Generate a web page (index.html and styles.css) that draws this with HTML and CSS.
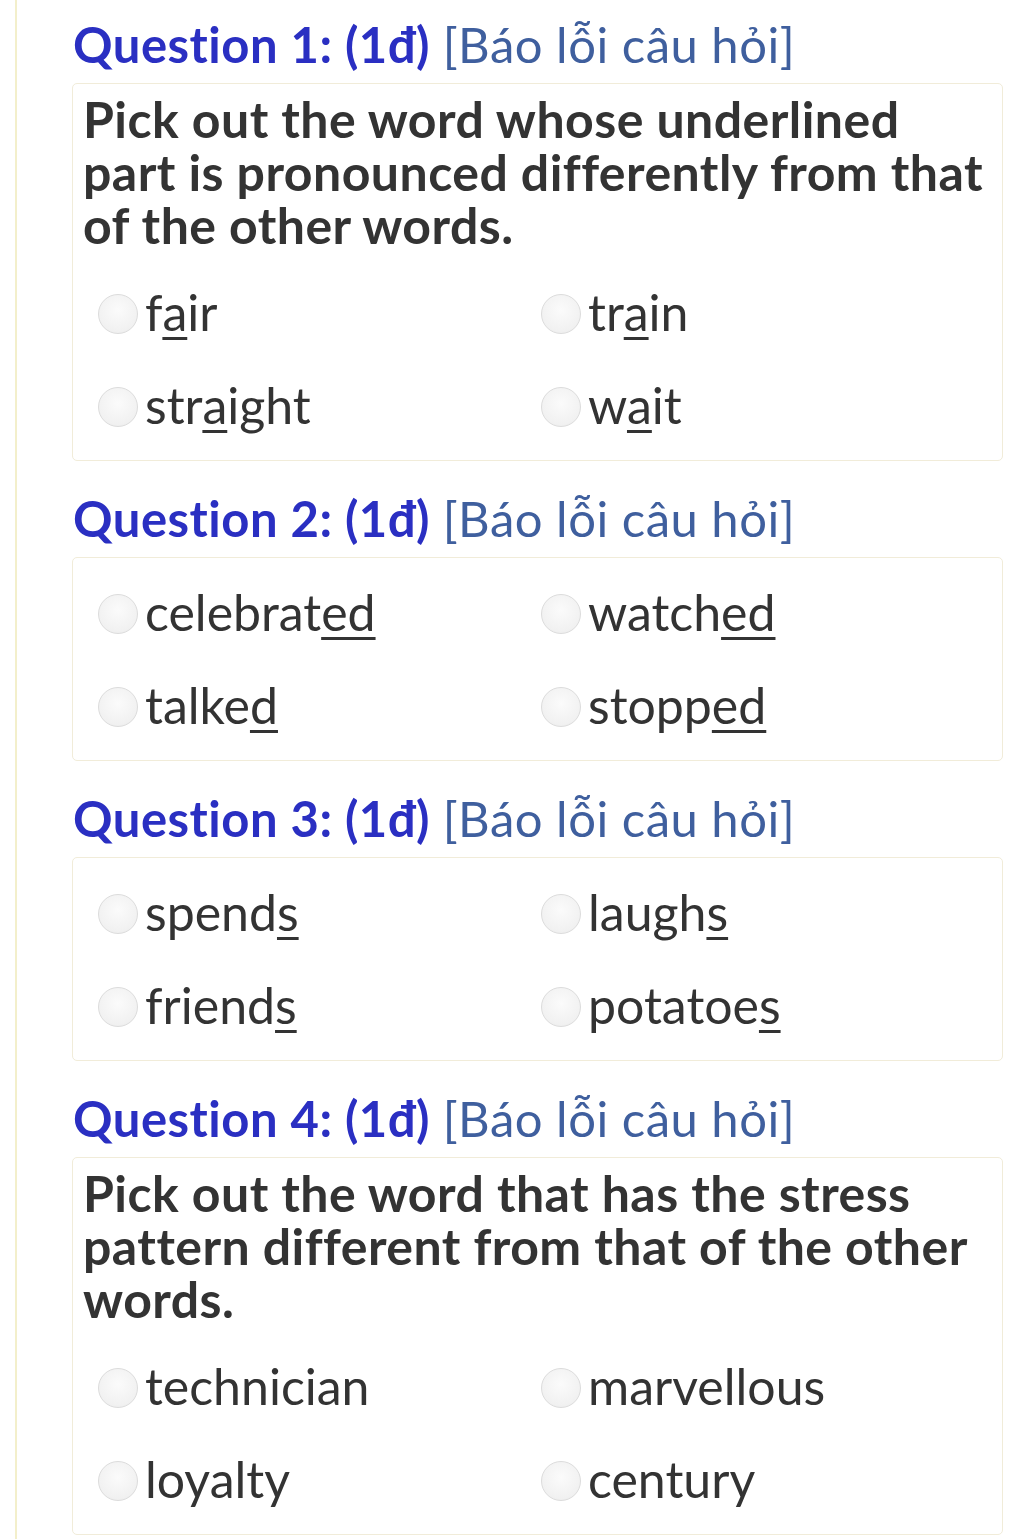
FILE: index.html
```html
<!DOCTYPE html>
<html lang="vi">
<head>
<meta charset="utf-8">
<title>Quiz</title>
<link rel="stylesheet" href="styles.css">
</head>
<body>
<div class="page">
  <section class="question first">
    <h2 class="q-title"><span class="q-num">Question 1: (1đ)</span> <a class="report" href="#">[Báo lỗi câu hỏi]</a></h2>
    <div class="q-box">
      <p class="q-text">Pick out the word whose underlined part is pronounced differently from that of the other words.</p>
      <div class="options">
        <label class="opt"><span class="radio"></span><span class="word">f<u>a</u>ir</span></label>
        <label class="opt"><span class="radio"></span><span class="word">tr<u>a</u>in</span></label>
        <label class="opt"><span class="radio"></span><span class="word">str<u>a</u>ight</span></label>
        <label class="opt"><span class="radio"></span><span class="word">w<u>a</u>it</span></label>
      </div>
    </div>
  </section>
  <section class="question">
    <h2 class="q-title"><span class="q-num">Question 2: (1đ)</span> <a class="report" href="#">[Báo lỗi câu hỏi]</a></h2>
    <div class="q-box">
      <div class="options">
        <label class="opt"><span class="radio"></span><span class="word">celebrat<u>ed</u></span></label>
        <label class="opt"><span class="radio"></span><span class="word">watch<u>ed</u></span></label>
        <label class="opt"><span class="radio"></span><span class="word">talke<u>d</u></span></label>
        <label class="opt"><span class="radio"></span><span class="word">stopp<u>ed</u></span></label>
      </div>
    </div>
  </section>
  <section class="question">
    <h2 class="q-title"><span class="q-num">Question 3: (1đ)</span> <a class="report" href="#">[Báo lỗi câu hỏi]</a></h2>
    <div class="q-box">
      <div class="options">
        <label class="opt"><span class="radio"></span><span class="word">spend<u>s</u></span></label>
        <label class="opt"><span class="radio"></span><span class="word">laugh<u>s</u></span></label>
        <label class="opt"><span class="radio"></span><span class="word">friend<u>s</u></span></label>
        <label class="opt"><span class="radio"></span><span class="word">potatoe<u>s</u></span></label>
      </div>
    </div>
  </section>
  <section class="question">
    <h2 class="q-title"><span class="q-num">Question 4: (1đ)</span> <a class="report" href="#">[Báo lỗi câu hỏi]</a></h2>
    <div class="q-box">
      <p class="q-text">Pick out the word that has the stress pattern different from that of the other words.</p>
      <div class="options">
        <label class="opt"><span class="radio"></span><span class="word">technician</span></label>
        <label class="opt"><span class="radio"></span><span class="word">marvellous</span></label>
        <label class="opt"><span class="radio"></span><span class="word">loyalty</span></label>
        <label class="opt"><span class="radio"></span><span class="word">century</span></label>
      </div>
    </div>
  </section>
</div>
</body>
</html>
```

FILE: styles.css
```css
html, body {
  margin: 0;
  padding: 0;
  background: #ffffff;
}
body {
  font-family: Lato, "Noto Sans", sans-serif;
  color: #333333;
}
.page {
  margin-left: 15px;
  margin-right: 21px;
  border-left: 2px solid #f3efcb;
  padding-left: 55px;
  min-height: 1539px;
  box-sizing: border-box;
}
.q-title {
  margin: 0 0 9px 0;
  padding-top: 27px;
  height: 60px;
  line-height: 60px;
  font-size: 49px;
  font-weight: 400;
  white-space: nowrap;
  padding-left: 1px;
}
.question.first .q-title {
  padding-top: 14px;
}
.q-num {
  color: #2a2fc2;
  font-weight: 700;
  letter-spacing: 0.5px;
}
.report {
  color: #3f5f9e;
  text-decoration: none;
  letter-spacing: 0.5px;
}
.q-box {
  border: 1px solid #f1ecd9;
  border-radius: 5px;
  background: #ffffff;
}
.q-text {
  margin: 0 0 6px 0;
  padding: 9px 10px 0 10px;
  font-size: 50px;
  line-height: 53px;
  font-weight: 700;
  letter-spacing: 0.45px;
  color: #333333;
}
.options {
  display: grid;
  grid-template-columns: 443px 1fr;
  padding: 9px 0 7px 25px;
}
.opt {
  display: flex;
  align-items: center;
  gap: 7px;
  height: 93px;
  font-size: 50px;
  color: #333333;
}
.radio {
  width: 38px;
  height: 38px;
  border-radius: 50%;
  border: 1px solid #dcdcdc;
  background: radial-gradient(circle at 50% 40%, #fbfbfb 0%, #f1f1f1 70%, #e6e6e6 100%);
  flex: none;
}
.word {
  line-height: 1;
  margin-bottom: 3px;
}
.word u {
  text-decoration-thickness: 3px;
  text-underline-offset: 6px;
}
```
